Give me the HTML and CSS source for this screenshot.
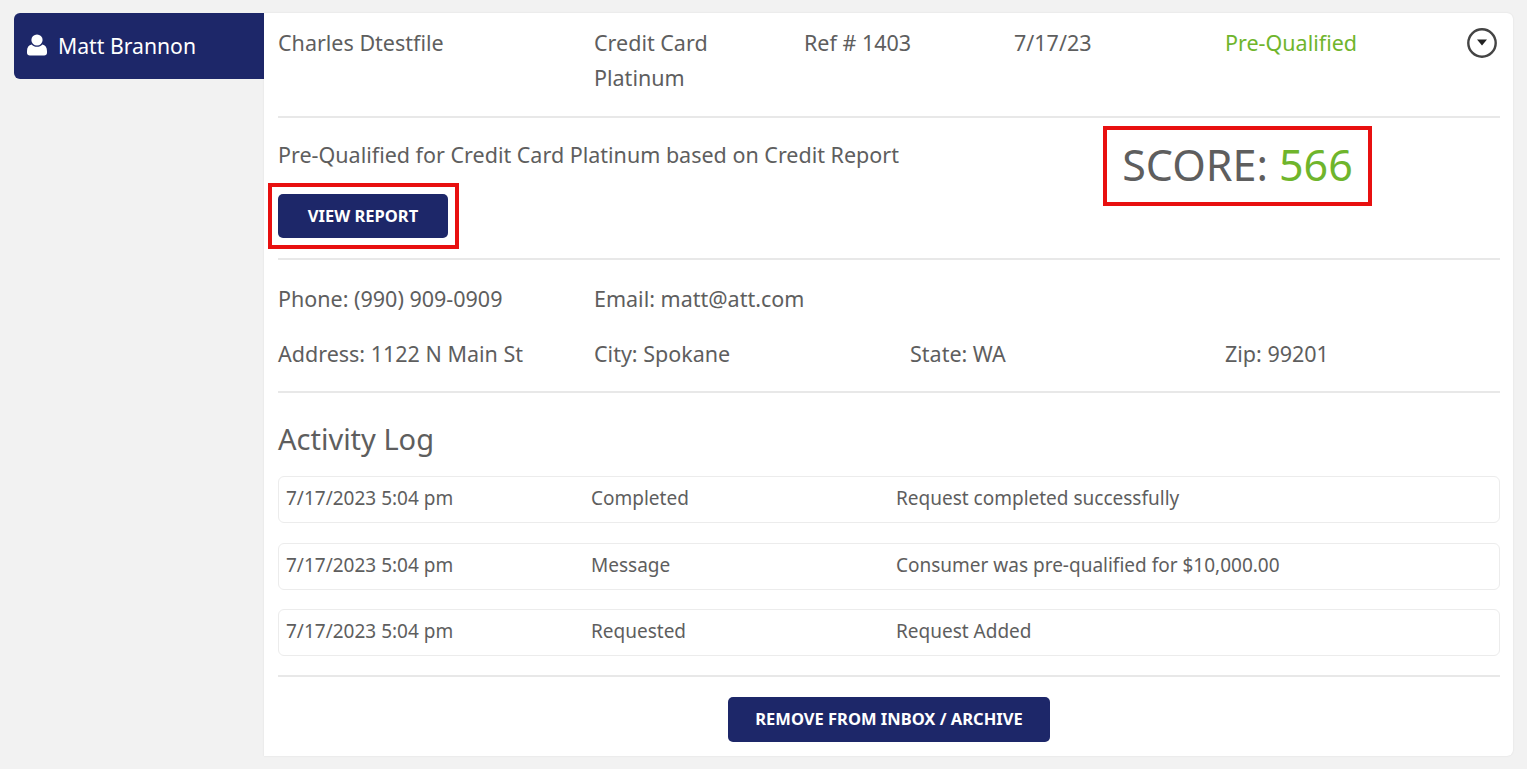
FILE: index.html
```html
<!DOCTYPE html>
<html lang="en">
<head>
    <meta charset="UTF-8">
    <meta name="viewport" content="width=device-width, initial-scale=1.0">
    <title>Request Details</title>
    <link rel="stylesheet" href="styles.css">
</head>
<body>

    <div class="page">
        <div class="side-tab">
            <svg class="user-icon" viewBox="0 0 20 22" aria-hidden="true">
                <circle cx="10" cy="6" r="5.6"/>
                <path d="M4.6 10.4C6 11.9 7.9 12.7 10 12.7s4-.8 5.4-2.3c2.8.4 4.6 2.8 4.6 6.6v1.8c0 1.7-1.2 2.700-2.800 2.700H2.800C1.200 21.500 0 20.500 0 18.800V17c0-3.800 1.800-6.200 4.600-6.600z"/>
            </svg>
            <span>Matt Brannon</span>
        </div>

        <div class="card">
            <div class="summary">
                <div>Charles Dtestfile</div>
                <div>Credit Card Platinum</div>
                <div>Ref # 1403</div>
                <div>7/17/23</div>
                <div class="green">Pre-Qualified</div>
                <svg class="toggle" viewBox="0 0 30 30" aria-hidden="true">
                    <circle cx="15" cy="15" r="13.7"/>
                    <path class="arrow" d="M10 11.500h10L15 17.500z"/>
                </svg>
            </div>

            <div class="result">
                <div class="result-left">
                    <p>Pre-Qualified for Credit Card Platinum based on Credit Report</p>
                    <button type="button" class="btn marked">VIEW REPORT</button>
                </div>
                <div class="score"><span>SCORE:</span> <span class="green">566</span></div>
            </div>

            <div class="contact">
                <div>Phone: (990) 909-0909</div>
                <div class="span-3">Email: matt@att.com</div>
                <div>Address: 1122 N Main St</div>
                <div>City: Spokane</div>
                <div>State: WA</div>
                <div>Zip: 99201</div>
            </div>

            <div class="activity">
                <h2>Activity Log</h2>
                <div class="log-row">
                    <div>7/17/2023 5:04 pm</div>
                    <div>Completed</div>
                    <div>Request completed successfully</div>
                </div>
                <div class="log-row">
                    <div>7/17/2023 5:04 pm</div>
                    <div>Message</div>
                    <div>Consumer was pre-qualified for $10,000.00</div>
                </div>
                <div class="log-row">
                    <div>7/17/2023 5:04 pm</div>
                    <div>Requested</div>
                    <div>Request Added</div>
                </div>
            </div>

            <div class="actions">
                <button type="button" class="btn wide">REMOVE FROM INBOX / ARCHIVE</button>
            </div>
        </div>
    </div>

</body>
</html>
```

FILE: styles.css
```css
body {
    font-family: "Noto Sans", "Open Sans", sans-serif;
    background-color: #f2f2f2;
    color: #5e5e5e;
    margin: 0;
    font-size: 21.5px;
    font-variant-ligatures: none;
}

.page {
    display: flex;
    align-items: flex-start;
    padding: 13px 14px;
}

.side-tab {
    width: 250px;
    height: 66px;
    box-sizing: border-box;
    flex-shrink: 0;
    display: flex;
    align-items: center;
    gap: 11px;
    padding: 0 0 2px 13px;
    font-size: 21.2px;
    background-color: #1d2769;
    color: white;
    border-radius: 6px 0 0 6px;
}

.user-icon {
    width: 20px;
    height: 22px;
    fill: white;
}

.card {
    flex: 1;
    height: 743px;
    box-sizing: border-box;
    padding: 0 13px 0 14px;
    background-color: white;
    border-radius: 0 6px 6px 0;
    box-shadow: 0 0 2px rgba(0, 0, 0, 0.1);
}

.green {
    color: #6fb52c;
}

.summary {
    display: grid;
    grid-template-columns: 316px 210px 210px 211px 1fr;
    height: 105px;
    box-sizing: border-box;
    padding-top: 12px;
    line-height: 35px;
    border-bottom: 2px solid #e8e8e8;
    position: relative;
}

.summary > div:nth-child(2) {
    width: 130px;
}

.toggle {
    position: absolute;
    top: 15px;
    right: 3px;
    width: 30px;
    height: 30px;
    fill: none;
    stroke: #444;
    stroke-width: 2.4;
}

.toggle .arrow {
    fill: #222;
    stroke: none;
}

.result {
    display: flex;
    justify-content: space-between;
    height: 142px;
    box-sizing: border-box;
    border-bottom: 2px solid #e8e8e8;
}

.result-left p {
    margin: 19px 0 22px;
    line-height: 35px;
}

.btn {
    font-family: inherit;
    font-weight: 700;
    font-size: 16.5px;
    color: white;
    background-color: #1d2769;
    border: none;
    border-radius: 5px;
    cursor: pointer;
    height: 44px;
    padding: 0 0 2px;
}

.btn.marked {
    width: 170px;
    position: relative;
    display: block;
}

.btn.marked::after {
    content: "";
    position: absolute;
    inset: -11px -11px -11px -10px;
    border: 4px solid #e81010;
}

.score {
    width: 269px;
    height: 80px;
    box-sizing: border-box;
    margin: 8px 128px 0 0;
    padding-bottom: 4px;
    border: 4px solid #e81010;
    display: flex;
    align-items: center;
    justify-content: center;
    gap: 11px;
    font-size: 43px;
}

.contact {
    display: grid;
    grid-template-columns: 316px 316px 315px 1fr;
    grid-auto-rows: 55px;
    align-items: center;
    height: 133px;
    box-sizing: border-box;
    padding-top: 11px;
    border-bottom: 2px solid #e8e8e8;
}

.span-3 {
    grid-column: span 3;
}

.activity {
    height: 284px;
    box-sizing: border-box;
    border-bottom: 2px solid #e8e8e8;
}

.activity h2 {
    margin: 0;
    padding-top: 25px;
    height: 83px;
    box-sizing: border-box;
    font-size: 29px;
    font-weight: 400;
    line-height: 42px;
}

.log-row {
    display: grid;
    grid-template-columns: 305px 305px 1fr;
    align-items: center;
    height: 47px;
    box-sizing: border-box;
    margin-bottom: 19.5px;
    padding-left: 7px;
    padding-bottom: 3px;
    border: 1px solid #ececec;
    border-radius: 6px;
    font-size: 19px;
}

.actions {
    display: flex;
    justify-content: center;
    padding-top: 20px;
}

.btn.wide {
    width: 322px;
    height: 45px;
}
```
